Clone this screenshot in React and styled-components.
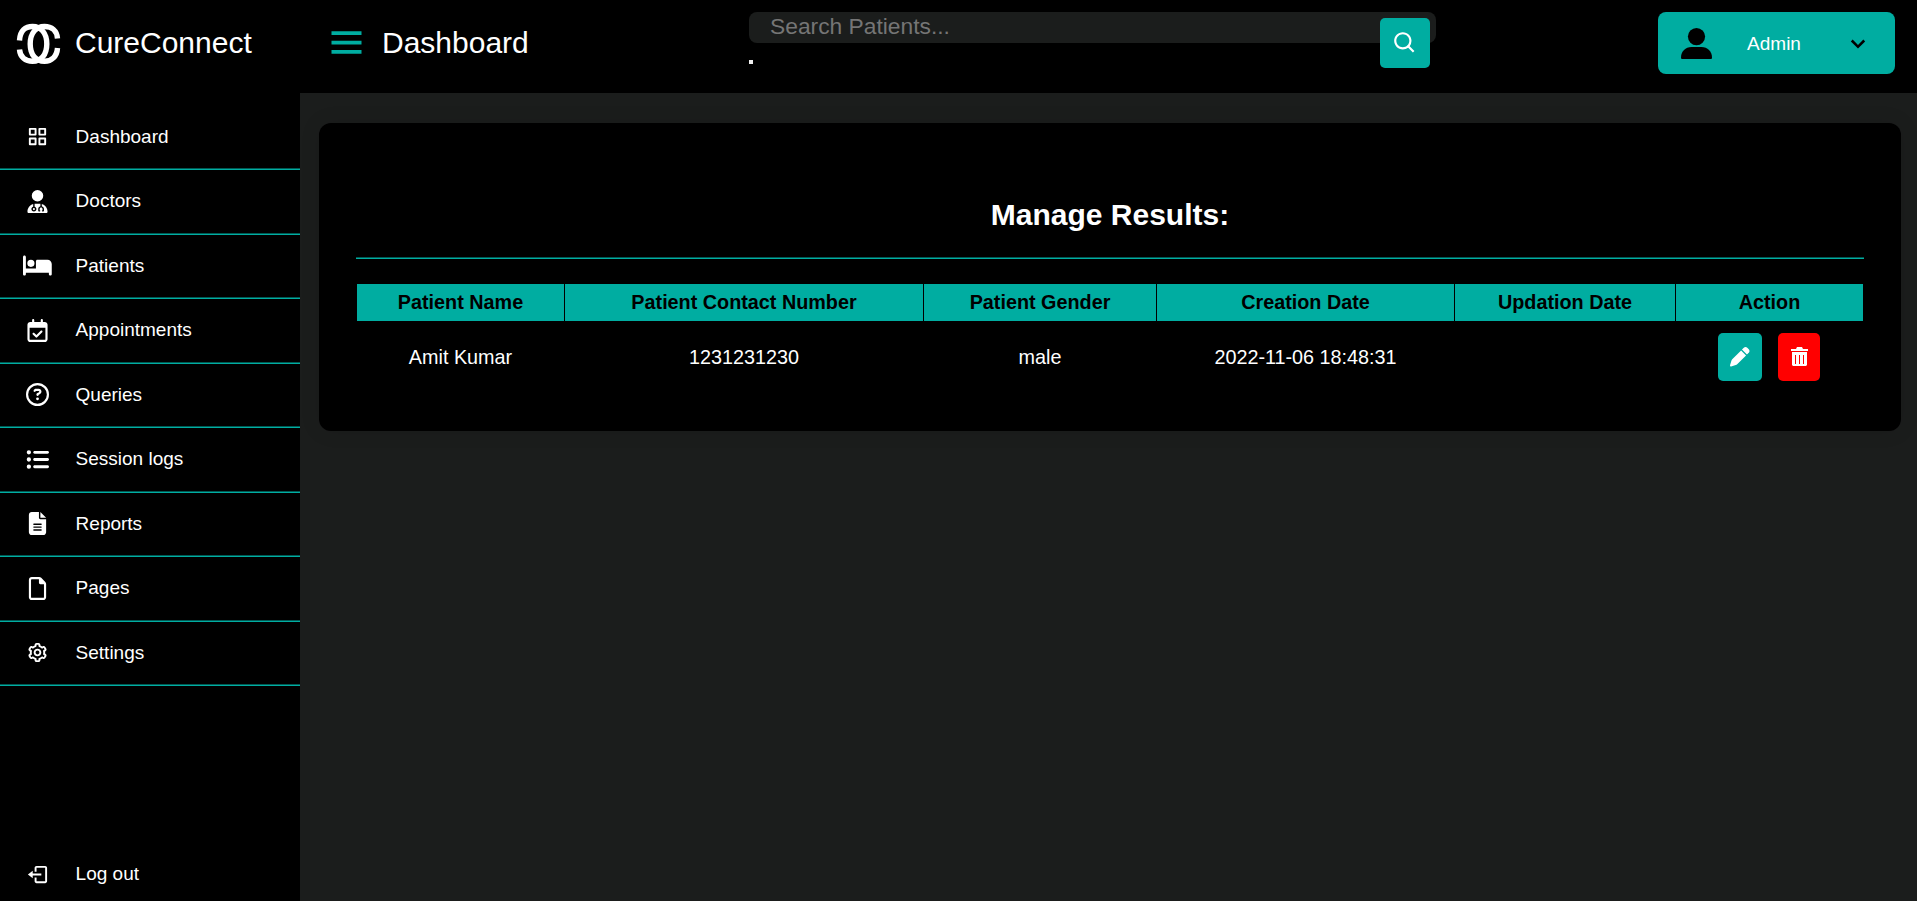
import React from "react";
import styled, { createGlobalStyle } from "styled-components";
import {
  BiChevronDown,
  BiCog,
  BiGridAlt,
  BiLogOut,
  BiMenu,
  BiSearch,
} from "react-icons/bi";
import {
  FaBed,
  FaFileLines,
  FaListUl,
  FaPen,
  FaRegCalendarCheck,
  FaRegCircleQuestion,
  FaRegFile,
  FaUserDoctor,
} from "react-icons/fa6";

const teal = "#00ada1";

const GlobalStyle = createGlobalStyle`
  * { box-sizing: border-box; margin: 0; padding: 0; }
  body {
    background: #1b1d1c;
    color: #fff;
    font-family: "Liberation Sans", Arial, sans-serif;
    overflow: hidden;
  }
  svg { display: block; flex: none; }
`;

const Page = styled.div`
  display: flex;
  height: 100vh;
`;

const Sidebar = styled.aside`
  display: flex;
  flex-direction: column;
  width: 300px;
  flex: none;
  background: #000;
`;

const Brand = styled.div`
  display: flex;
  align-items: center;
  height: 86px;
  margin-bottom: 19.9px;
  padding-left: 16px;
  gap: 14px;
  font-size: 30px;
`;

const Nav = styled.nav`
  flex: 1;
`;

const NavItem = styled.a`
  display: flex;
  align-items: center;
  height: ${(p) => (p.$plain ? "54px" : "64.5px")};
  padding-bottom: ${(p) => (p.$plain ? "0" : "1px")};
  border-bottom: ${(p) => (p.$plain ? "none" : `2px groove ${teal}`)};
  font-size: 19px;
  color: #fff;
`;

const NavIcon = styled.span`
  display: flex;
  justify-content: center;
  width: 75.6px;
  font-size: 23px;
  svg {
    width: ${(p) => (p.$wide ? "1.25em" : "1em")};
    height: 1em;
  }
`;

const Main = styled.div`
  flex: 1;
  display: flex;
  flex-direction: column;
`;

const Header = styled.header`
  display: flex;
  align-items: flex-start;
  justify-content: space-between;
  height: 93px;
  padding: 12px 22px 0 24px;
  background: #000;
`;

const Heading = styled.div`
  display: flex;
  align-items: center;
  width: 203px;
  height: 60px;
  gap: 13px;
  font-size: 30px;
  svg { color: ${teal}; }
`;

const HeadingText = styled.h1`
  padding-top: 2px;
  font-size: 30px;
  font-weight: 400;
`;

const SearchArea = styled.div`
  position: relative;
  width: 687px;
  height: 56px;
`;

const SearchInput = styled.input`
  display: block;
  width: 100%;
  height: 31px;
  padding: 0 21px 2px;
  border: 0;
  border-radius: 8px;
  background: #1b1d1c;
  color: #fff;
  font: 22.8px "Liberation Sans", Arial, sans-serif;
  &::placeholder { color: #757575; opacity: 1; }
`;

const SearchStub = styled.div`
  width: 4px;
  height: 4px;
  margin-top: 17px;
  background: #efefef;
`;

const SearchButton = styled.button`
  position: absolute;
  top: 6px;
  right: 6px;
  display: flex;
  align-items: center;
  justify-content: center;
  width: 50px;
  height: 50px;
  border: 0;
  border-radius: 5px;
  background: ${teal};
  color: #fff;
`;

const Profile = styled.div`
  display: flex;
  align-items: center;
  justify-content: space-between;
  width: 237px;
  height: 62px;
  padding: 0 22px 0 23px;
  border-radius: 8px;
  background: ${teal};
  font-size: 19px;
  svg { color: #000; }
`;

const ProfileName = styled.span`
  padding: 2px 7px 0 0;
`;

const Card = styled.section`
  margin: 30px 16px 0 19px;
  height: 308px;
  padding: 74px 37px 0;
  border-radius: 12px;
  background: #000;
  box-shadow: 0 0 20px rgba(0, 0, 0, 0.1);
`;

const CardTitle = styled.h2`
  height: 62px;
  padding-bottom: 24px;
  border-bottom: 2px groove ${teal};
  text-align: center;
  font-size: 30px;
  line-height: 36px;
`;

const Table = styled.table`
  width: 100%;
  margin-top: 24px;
  border-collapse: collapse;
  table-layout: fixed;
  font-size: 19.8px;
  text-align: center;
`;

const HeadCell = styled.th`
  width: ${(p) => p.$width}px;
  height: 38px;
  border: 1px solid #000;
  background: ${teal};
  color: #000;
  line-height: 23px;
`;

const Cell = styled.td`
  height: 72px;
  line-height: 23px;
`;

const Actions = styled.div`
  display: flex;
  justify-content: center;
  gap: 16px;
  padding: 0 2px 2px 0;
`;

const ActionButton = styled.button`
  display: flex;
  align-items: center;
  justify-content: center;
  width: ${(p) => (p.$danger ? 42 : 44)}px;
  height: 48px;
  padding-left: 1px;
  border: 0;
  border-radius: 5px;
  background: ${(p) => (p.$danger ? "#f00" : teal)};
  color: #fff;
  font-size: 19.5px;
`;

const navItems = [
  [BiGridAlt, "Dashboard"],
  [FaUserDoctor, "Doctors"],
  [FaBed, "Patients"],
  [FaRegCalendarCheck, "Appointments"],
  [FaRegCircleQuestion, "Queries"],
  [FaListUl, "Session logs"],
  [FaFileLines, "Reports"],
  [FaRegFile, "Pages"],
  [BiCog, "Settings"],
];

const columns = [
  ["Patient Name", 208],
  ["Patient Contact Number", 359],
  ["Patient Gender", 233],
  ["Creation Date", 298],
  ["Updation Date", 221],
  ["Action", 188],
];

const Logo = () => (
  <svg width="45" height="41" viewBox="0 0 45 41" fill="none" stroke="#fff" strokeWidth="5.4">
    <path d="M41.5 15.500C41 7.500 35.500 3.500 28.500 3.500C20 3.500 14.200 10 14.200 21S20 38.300 28.500 38.300C35.500 38.300 41 33.500 41.500 25" />
    <path d="M3.500 17.500C4 7.500 9.500 3.500 16.500 3.500C25 3.500 30.800 10 30.800 21S25 38.300 16.500 38.300C9.500 38.300 4 34 3.500 26.500" />
  </svg>
);

const PersonIcon = () => (
  <svg width="31" height="31" viewBox="0 0 31 31" fill="currentColor">
    <circle cx="15.500" cy="8.600" r="8.600" />
    <path d="M1.500 31C.5 31 0 30.500 0 29.500C0 23.500 4.500 19 10.500 19H20.500C26.500 19 31 23.500 31 29.500C31 30.500 30.500 31 29.500 31Z" />
  </svg>
);

const TrashIcon = () => (
  <svg width="17" height="19" viewBox="0 0 17 19" fill="currentColor" fillRule="evenodd">
    <path d="M6 0H11L12 2H17V4H0V2H5Z" />
    <path d="M1 5H16V18L15 19H2L1 18ZM4 8V17H5V8ZM8 8V17H9V8ZM12 8V17H13V8Z" />
  </svg>
);

export default function App() {
  return (
    <>
      <GlobalStyle />
      <Page>
        <Sidebar>
          <Brand>
            <Logo />
            CureConnect
          </Brand>
          <Nav>
            {navItems.map(([Icon, label]) => (
              <NavItem key={label}>
                <NavIcon $wide={Icon === FaBed}><Icon /></NavIcon>
                {label}
              </NavItem>
            ))}
          </Nav>
          <NavItem $plain>
            <NavIcon><BiLogOut /></NavIcon>
            Log out
          </NavItem>
        </Sidebar>
        <Main>
          <Header>
            <Heading>
              <BiMenu size={45} />
              <HeadingText>Dashboard</HeadingText>
            </Heading>
            <SearchArea>
              <SearchInput placeholder="Search Patients..." />
              <SearchStub />
              <SearchButton><BiSearch size={26} /></SearchButton>
            </SearchArea>
            <Profile>
              <PersonIcon />
              <ProfileName>Admin</ProfileName>
              <BiChevronDown size={30} />
            </Profile>
          </Header>
          <Card>
            <CardTitle>Manage Results:</CardTitle>
            <Table>
              <thead>
                <tr>
                  {columns.map(([label, width]) => (
                    <HeadCell key={label} $width={width}>{label}</HeadCell>
                  ))}
                </tr>
              </thead>
              <tbody>
                <tr>
                  <Cell>Amit Kumar</Cell>
                  <Cell>1231231230</Cell>
                  <Cell>male</Cell>
                  <Cell>2022-11-06 18:48:31</Cell>
                  <Cell />
                  <Cell>
                    <Actions>
                      <ActionButton><FaPen /></ActionButton>
                      <ActionButton $danger><TrashIcon /></ActionButton>
                    </Actions>
                  </Cell>
                </tr>
              </tbody>
            </Table>
          </Card>
        </Main>
      </Page>
    </>
  );
}
